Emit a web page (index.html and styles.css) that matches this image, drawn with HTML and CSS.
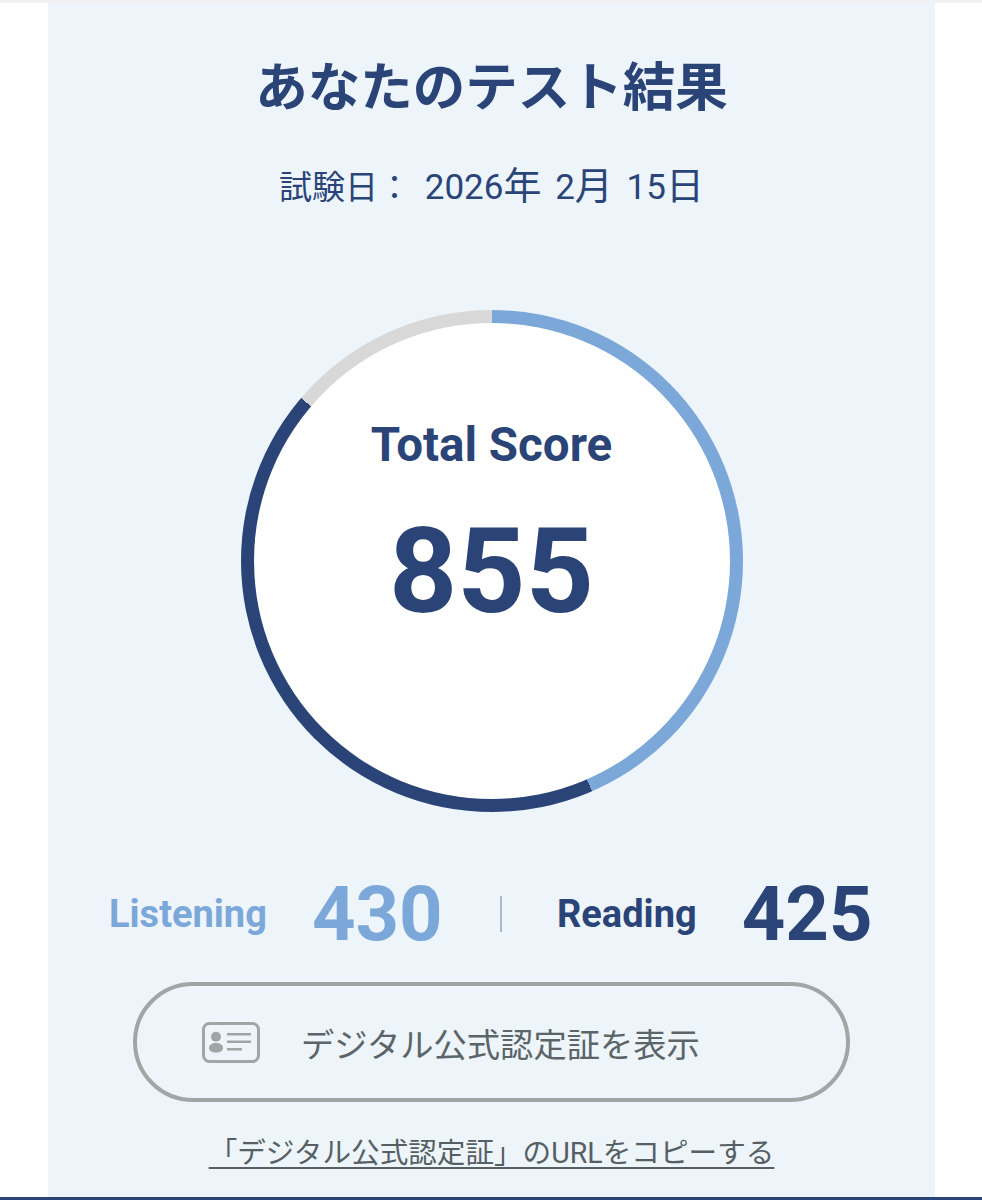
FILE: index.html
```html
<!DOCTYPE html>
<html lang="ja">
<head>
    <meta charset="UTF-8">
    <meta name="viewport" content="width=device-width, initial-scale=1.0">
    <title>あなたのテスト結果</title>
    <link rel="stylesheet" href="styles.css">
</head>
<body>
    <main class="panel">
        <h1 class="title">あなたのテスト結果</h1>
        <p class="test-date"><span class="date-label">試験日：</span> 2026<span class="date-unit">年</span> 2<span class="date-unit">月</span> 15<span class="date-unit">日</span></p>

        <div class="ring">
            <div class="ring-inner">
                <p class="total-label">Total Score</p>
                <p class="total-value">855</p>
            </div>
        </div>

        <div class="sections">
            <div class="section section-listening">
                <span class="section-label">Listening</span>
                <span class="section-value">430</span>
            </div>
            <span class="divider"></span>
            <div class="section section-reading">
                <span class="section-label">Reading</span>
                <span class="section-value">425</span>
            </div>
        </div>

        <a class="cert-button" href="#">
            <svg class="cert-icon" width="58" height="41" viewBox="0 0 58 41">
                <rect x="1.500" y="1.500" width="55" height="38" rx="6" fill="none" stroke="#9ea6a6" stroke-width="3"/>
                <circle cx="14" cy="14.700" r="5" fill="#9ea6a6"/>
                <path d="M7 26c0-3 3-5 7-5s7 2 7 5-3 4.500-7 4.500-7-1.500-7-4.500z" fill="#9ea6a6"/>
                <path d="M25 12.300h24M25 19.700h24M25 27.300h15" stroke="#9ea6a6" stroke-width="2.500" fill="none"/>
            </svg>
            <span>デジタル公式認定証を表示</span>
        </a>

        <a class="copy-link" href="#">「デジタル公式認定証」のURLをコピーする</a>
    </main>
</body>
</html>
```

FILE: styles.css
```css
html, body {
    margin: 0;
    padding: 0;
}
body {
    height: 1200px;
    overflow: hidden;
    background: #ffffff;
    border-top: 3px solid #f1f1f1;
    border-bottom: 3px solid #2a4478;
    box-sizing: border-box;
    font-family: Roboto, "Noto Sans CJK JP", sans-serif;
    color: #2a4478;
}
.panel {
    box-sizing: border-box;
    height: 100%;
    margin: 0 47px 0 48px;
    background: #edf4fa;
    display: flex;
    flex-direction: column;
    align-items: center;
}
.title {
    margin: 52px 0 0;
    font-size: 52.500px;
    line-height: 66px;
    font-weight: 700;
}
.test-date {
    margin: 42px 0 0;
    font-size: 35px;
    line-height: 46px;
    font-weight: 400;
    word-spacing: 5px;
}
.date-label {
    font-size: 33px;
}
.date-unit {
    font-size: 38px;
}
.ring {
    margin-top: 99px;
    width: 502px;
    height: 502px;
    border-radius: 50%;
    padding: 13px;
    box-sizing: border-box;
    background: conic-gradient(#7ba7d9 0deg 156.500deg, #2a4478 156.500deg 310.500deg, #d8d8d8 310.500deg 360deg);
}
.ring-inner {
    width: 100%;
    height: 100%;
    border-radius: 50%;
    background: #ffffff;
    display: flex;
    flex-direction: column;
    align-items: center;
}
.total-label {
    margin: 94px 0 0;
    font-size: 47.500px;
    line-height: 56px;
    font-weight: 700;
}
.total-value {
    margin: 29px 0 0;
    font-size: 119px;
    line-height: 140px;
    font-weight: 700;
}
.sections {
    margin-top: 67px;
    width: 100%;
    display: flex;
    align-items: center;
    height: 70px;
    padding-left: 61px;
    box-sizing: border-box;
}
.section {
    display: flex;
    align-items: center;
}
.section-listening {
    color: #7ba7d9;
    width: 333px;
    gap: 45px;
}
.section-reading {
    margin-left: 55px;
    gap: 45px;
}
.section-label {
    font-size: 38px;
    font-weight: 700;
}
.section-value {
    font-size: 76px;
    line-height: 70px;
    font-weight: 700;
}
.divider {
    width: 2px;
    height: 36px;
    background: #a9b7d0;
    margin-left: 58px;
}
.cert-button {
    margin-top: 33px;
    box-sizing: border-box;
    width: 717px;
    height: 120px;
    border: 4px solid #9ea6a6;
    border-radius: 60px;
    padding-left: 65px;
    display: flex;
    align-items: center;
    gap: 41px;
    color: #5b6468;
    text-decoration: none;
    font-size: 33.300px;
    font-weight: 400;
}
.cert-icon {
    flex-shrink: 0;
}
.copy-link {
    margin-top: 32px;
    font-size: 28.600px;
    line-height: 38px;
    color: #565f64;
    text-decoration: underline;
    text-decoration-thickness: 2px;
    text-underline-offset: 4px;
}
```
